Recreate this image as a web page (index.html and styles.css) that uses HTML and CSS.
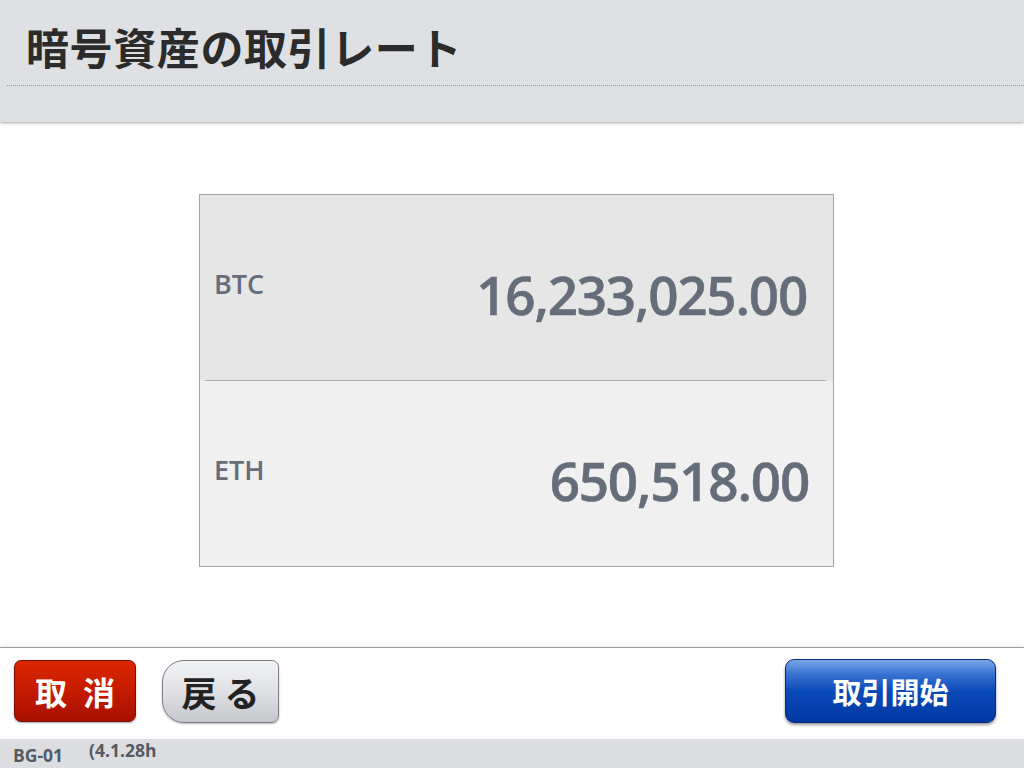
FILE: index.html
```html
<!DOCTYPE html>
<html lang="ja">
<head>
<meta charset="utf-8">
<link rel="stylesheet" href="styles.css">
</head>
<body>
<div class="screen">
  <header class="header">
    <h1 class="title">暗号資産の取引レート</h1>
    <div class="rule"></div>
  </header>
  <main class="main">
    <div class="rates">
      <div class="row row-btc">
        <span class="sym">BTC</span>
        <span class="val">16,233,025.00</span>
      </div>
      <div class="sep"></div>
      <div class="row row-eth">
        <span class="sym">ETH</span>
        <span class="val">650,518.00</span>
      </div>
    </div>
  </main>
  <footer class="footer">
    <div class="actions">
      <button class="btn btn-cancel">取消</button>
      <button class="btn btn-back">戻る</button>
      <div class="spacer"></div>
      <button class="btn btn-start">取引開始</button>
    </div>
    <div class="status">
      <span class="code">BG-01</span>
      <span class="ver">(4.1.28h</span>
    </div>
  </footer>
</div>
</body>
</html>
```

FILE: styles.css
```css
html, body {
  margin: 0;
  padding: 0;
  background: #ffffff;
}
.screen {
  width: 1024px;
  height: 768px;
  display: flex;
  flex-direction: column;
  overflow: hidden;
  font-family: "Open Sans", "Noto Sans CJK JP", sans-serif;
}
.header {
  height: 122px;
  background: #dee0e4;
  box-shadow: 0 1px 3px rgba(0,0,0,0.35);
  position: relative;
  z-index: 1;
  padding-top: 1px;
  box-sizing: border-box;
}
.title {
  margin: 0;
  padding: 15px 0 0 26px;
  height: 69px;
  box-sizing: border-box;
  font-family: "Noto Sans CJK JP", sans-serif;
  font-weight: 700;
  font-size: 43px;
  line-height: 60px;
  color: #2b2b2b;
  letter-spacing: 0.6px;
}
.rule {
  margin: 15px 0 0 7px;
  border-top: 1px dotted #9a9a9a;
}
.main {
  flex: 1;
  padding-top: 72px;
  box-sizing: border-box;
}
.rates {
  margin-left: 199px;
  width: 633px;
  border: 1px solid #a4a4a4;
  background: #f0f0f0;
}
.row {
  height: 185px;
  display: flex;
  align-items: center;
  justify-content: space-between;
  padding: 0 26px 0 14px;
  color: #656d7a;
}
.row-btc { background: #e6e6e6; }
.row-eth { background: #f0f0f0; padding-right: 24px; }
.sep {
  height: 1px;
  background: #e6e6e6;
  position: relative;
}
.sep::after {
  content: "";
  position: absolute;
  left: 5px;
  right: 7px;
  top: 0;
  border-top: 1px solid #acacac;
}
.sym {
  font-weight: 600;
  font-size: 27px;
  margin-top: -9px;
  font-stretch: 94%;
}
.val {
  font-weight: 600;
  font-size: 53px;
  margin-top: 14px;
  display: inline-block;
  font-stretch: 88%;
  letter-spacing: -1.2px;
  -webkit-text-stroke: 0.5px #656d7a;
}
.footer {
  height: 120px;
  border-top: 1px solid #9c9c9c;
  box-shadow: 0 -3px 4px rgba(0,0,0,0.06);
  display: flex;
  flex-direction: column;
}
.actions {
  flex: 1;
  display: flex;
  align-items: flex-start;
  padding: 12px 28px 0 14px;
}
.spacer { flex: 1; }
.btn {
  font-family: "Noto Sans CJK JP", sans-serif;
  font-weight: 700;
  border: none;
  margin: 0;
  padding: 0;
  cursor: pointer;
}
.btn-cancel {
  width: 122px;
  height: 62px;
  border-radius: 7px;
  border: 1px solid #7a1005;
  background: linear-gradient(#d92800 0%, #c81c00 45%, #a81000 100%);
  color: #ffffff;
  font-size: 32px;
  letter-spacing: 16px;
  padding-left: 16px;
  box-shadow: 0 1px 2px rgba(0,0,0,0.35);
}
.btn-back {
  margin-left: 26px;
  width: 117px;
  height: 63px;
  border-radius: 22px 7px 7px 22px;
  border: 1px solid #7d7f84;
  background: linear-gradient(#f2f3f5 0%, #dfe1e5 50%, #c5c7cc 100%);
  color: #222222;
  font-size: 35px;
  letter-spacing: 8px;
  padding-left: 8px;
  box-shadow: 0 1px 2px rgba(0,0,0,0.3);
}
.btn-start {
  width: 211px;
  height: 64px;
  margin-top: -1px;
  border-radius: 9px;
  border: 1px solid #062a78;
  background: linear-gradient(#7aa6e4 0%, #3a74d4 22%, #0a4ab8 50%, #0038a2 100%);
  color: #ffffff;
  font-size: 29px;
  box-shadow: 0 2px 3px rgba(0,0,0,0.4);
}
.status {
  height: 29px;
  background: #dcdde1;
  display: flex;
  align-items: center;
  padding-left: 13px;
  color: #555a63;
  font-weight: 700;
  font-size: 17.5px;
}
.ver {
  margin-left: 26px;
  margin-top: -7px;
}
.code { margin-top: 2px; }
```
